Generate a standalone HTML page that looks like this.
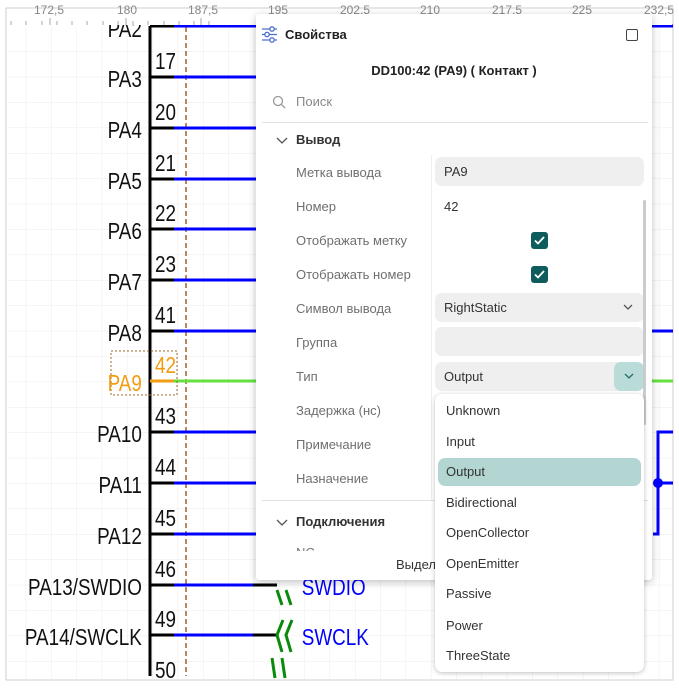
<!DOCTYPE html>
<html><head><meta charset="utf-8"><style>
*{margin:0;padding:0;box-sizing:border-box}
body{width:679px;height:688px;background:#fff;position:relative;overflow:hidden;font-family:"Liberation Sans","DejaVu Sans",sans-serif}
.a{position:absolute}
.panel{left:256px;top:14px;width:396px;height:566px;background:#fff;box-shadow:0 2px 8px rgba(0,0,0,.25);border-radius:3px}
.lbl{position:absolute;left:40px;font-size:13px;color:#6f6f6f;line-height:16px}
.box{position:absolute;left:179px;width:209px;height:29px;background:#eeefee;border-radius:7px;font-size:13px;color:#333;line-height:29px;padding-left:9px}
.cb{position:absolute;left:275px;width:17px;height:17px;background:#0f5c5c;border-radius:3px}
.dd{left:435px;top:394px;width:209px;height:278px;background:#fff;border-radius:7px;box-shadow:0 1px 5px rgba(0,0,0,.25)}
.it{position:absolute;left:11px;font-size:13px;color:#333;line-height:16px}
</style></head><body>
<svg class="a" style="left:0;top:0" width="679" height="688">
<defs><pattern id="g" x="0.3" y="0.6" width="25.33" height="25.4" patternUnits="userSpaceOnUse"><path d="M0 0V25.4M0 0H25.33" stroke="#ebebeb" stroke-width="1" fill="none"/></pattern></defs>
<rect x="6" y="8" width="667" height="672" fill="#fff" stroke="#cfcfcf"/>
<rect x="7" y="27" width="665" height="652" fill="url(#g)"/>
<path d="M150 26V676" stroke="#000" stroke-width="3"/>
<path d="M186 27V676" stroke="#a0642a" stroke-width="1.5" stroke-dasharray="5,3"/>
<g stroke-width="3" fill="none">
<g stroke="#000"><path d="M150 26h24M150 77h24M150 128h24M150 179h24M150 229h24M150 280h24M150 331h24M150 432h24M150 483h24M150 534h24M150 585h24M150 635h24M253 585h24M253 635h24"/></g>
<g stroke="#0000ff"><path d="M174 26h82M174 77h82M174 128h82M174 179h82M174 229h82M174 280h82M174 331h82M174 432h82M174 483h82M174 534h82M174 585h79M174 635h79M652 26h21M652 331h21"/>
<polyline points="673,432 658,432 658,534 653,534"/><path d="M658 483h15"/></g>
<path d="M150 381h24" stroke="#f39c12"/><path d="M174 381h82M652 381h21" stroke="#66e040"/>
</g>
<circle cx="658" cy="483" r="5" fill="#0000ff"/>
<rect x="111" y="351" width="66" height="44" fill="none" stroke="#a0642a" stroke-dasharray="2,2"/>
<g stroke="#0a8a0a" stroke-width="3" fill="none"><path d="M277 590l5 15M286 590l5 15M283 620l-6 15 5 17M292 620l-6 15 5 17M272 658l3 20M282 658l3 20"/></g>
<g font-family="Liberation Sans,sans-serif" font-size="23" fill="#111" text-anchor="end" transform="scale(0.82,1)">
<text x="173" y="37">PA2</text><text x="173" y="87">PA3</text><text x="173" y="138">PA4</text><text x="173" y="189">PA5</text><text x="173" y="239">PA6</text><text x="173" y="290">PA7</text><text x="173" y="341">PA8</text><text x="173" y="391" fill="#f39c12">PA9</text><text x="173" y="442">PA10</text><text x="173" y="493">PA11</text><text x="173" y="544">PA12</text><text x="173" y="595">PA13/SWDIO</text><text x="173" y="645">PA14/SWCLK</text>
</g>
<g font-family="Liberation Sans,sans-serif" font-size="23" fill="#111" transform="scale(0.82,1)">
<text x="189" y="69">17</text><text x="189" y="120">20</text><text x="189" y="171">21</text><text x="189" y="221">22</text><text x="189" y="272">23</text><text x="189" y="323">41</text><text x="189" y="373" fill="#f39c12">42</text><text x="189" y="424">43</text><text x="189" y="475">44</text><text x="189" y="526">45</text><text x="189" y="577">46</text><text x="189" y="627">49</text><text x="189" y="678">50</text>
<text x="368" y="595" fill="#0000ff">SWDIO</text><text x="368" y="645" fill="#0000ff">SWCLK</text>
</g>
<rect x="7" y="9" width="665" height="16" fill="#fff"/>
<g fill="#888" font-family="Liberation Sans" font-size="12">
<text x="34" y="14">172,5</text><text x="117" y="14">180</text><text x="188" y="14">187,5</text><text x="268" y="14">195</text><text x="340" y="14">202,5</text><text x="420" y="14">210</text><text x="492" y="14">217,5</text><text x="572" y="14">225</text><text x="644" y="14">232,5</text>
</g>
<g stroke="#aaa"><path d="M11 21v4M26 21v4M42 21v4M50 18v7M57 21v4M72 21v4M87 21v4M103 21v4M118 21v4M126 18v7M133 21v4M148 21v4M164 21v4M179 21v4M194 21v4M201 18v7M209 21v4"/></g>
</svg>
<div class="a panel">
<svg class="a" style="left:6px;top:12px" width="16" height="17"><g stroke="#4a6fd0" stroke-width="1.3" fill="#fff"><path d="M0 3h15M0 8.5h15M0 14h15"/><circle cx="10" cy="3" r="2.2"/><circle cx="5" cy="8.5" r="2.2"/><circle cx="10" cy="14" r="2.2"/></g></svg>
<div class="a" style="left:29px;top:13px;font-size:13px;font-weight:bold;color:#222">Свойства</div>
<div class="a" style="left:370px;top:15px;width:12px;height:12px;border:1.5px solid #444;border-radius:2px"></div>
<div class="a" style="left:0;width:396px;top:49px;text-align:center;font-size:13px;font-weight:bold;color:#222">DD100:42 (PA9) ( Контакт )</div>
<svg class="a" style="left:16px;top:81px" width="14" height="14"><circle cx="6" cy="6" r="4.5" stroke="#999" stroke-width="1.3" fill="none"/><path d="M9.3 9.3L13 13" stroke="#999" stroke-width="1.3"/></svg>
<div class="a" style="left:40px;top:80px;font-size:13px;color:#888">Поиск</div>
<div class="a" style="left:6px;top:108px;width:386px;height:1px;background:#dde2e2"></div>
<svg class="a" style="left:20px;top:123px" width="12" height="8"><path d="M1 1l5 5 5-5" stroke="#555" stroke-width="1.3" fill="none"/></svg>
<div class="a" style="left:40px;top:118px;font-size:13px;font-weight:bold;color:#333">Вывод</div>
<div class="a" style="left:175px;top:141px;width:1px;height:345px;background:#eee"></div>
<div class="lbl" style="top:151px">Метка вывода</div>
<div class="lbl" style="top:185px">Номер</div>
<div class="lbl" style="top:219px">Отображать метку</div>
<div class="lbl" style="top:253px">Отображать номер</div>
<div class="lbl" style="top:287px">Символ вывода</div>
<div class="lbl" style="top:321px">Группа</div>
<div class="lbl" style="top:355px">Тип</div>
<div class="lbl" style="top:389px">Задержка (нс)</div>
<div class="lbl" style="top:423px">Примечание</div>
<div class="lbl" style="top:457px">Назначение</div>
<div class="box" style="top:143px">PA9</div>
<div class="a" style="left:188px;top:185px;font-size:13px;color:#333">42</div>
<div class="cb" style="top:218px"><svg width="17" height="17"><path d="M4 8.5l3 3 6-6.5" stroke="#fff" stroke-width="1.8" fill="none"/></svg></div>
<div class="cb" style="top:252px"><svg width="17" height="17"><path d="M4 8.5l3 3 6-6.5" stroke="#fff" stroke-width="1.8" fill="none"/></svg></div>
<div class="box" style="top:279px">RightStatic<svg class="a" style="left:188px;top:11px" width="10" height="7"><path d="M1 1l4 4 4-4" stroke="#555" stroke-width="1.3" fill="none"/></svg></div>
<div class="box" style="top:313px"></div>
<div class="box" style="top:348px">Output<div class="a" style="left:179px;top:0;width:30px;height:29px;background:#b9dcd9;border-radius:7px"><svg class="a" style="left:10px;top:11px" width="10" height="7"><path d="M1 1l4 4 4-4" stroke="#2a6b6b" stroke-width="1.3" fill="none"/></svg></div></div>
<div class="a" style="left:387px;top:186px;width:3px;height:225px;background:#c9cccc;border-radius:2px"></div>
<div class="a" style="left:6px;top:486px;width:386px;height:1px;background:#dde2e2"></div>
<svg class="a" style="left:20px;top:505px" width="12" height="8"><path d="M1 1l5 5 5-5" stroke="#555" stroke-width="1.3" fill="none"/></svg>
<div class="a" style="left:40px;top:500px;font-size:13px;font-weight:bold;color:#333">Подключения</div>
<div class="a" style="left:40px;top:531px;height:6px;overflow:hidden;font-size:13px;color:#777;line-height:16px">NC</div>
<div class="a" style="left:140px;top:543px;font-size:13px;color:#333">Выдел</div>
</div>
<div class="a dd">
<div class="it" style="top:9px">Unknown</div>
<div class="it" style="top:40px">Input</div>
<div class="a" style="left:3px;top:64px;width:203px;height:28px;background:#b4d6d3;border-radius:7px"></div>
<div class="it" style="top:70px">Output</div>
<div class="it" style="top:101px">Bidirectional</div>
<div class="it" style="top:131px">OpenCollector</div>
<div class="it" style="top:162px">OpenEmitter</div>
<div class="it" style="top:192px">Passive</div>
<div class="it" style="top:224px">Power</div>
<div class="it" style="top:254px">ThreeState</div>
</div>
</body></html>
